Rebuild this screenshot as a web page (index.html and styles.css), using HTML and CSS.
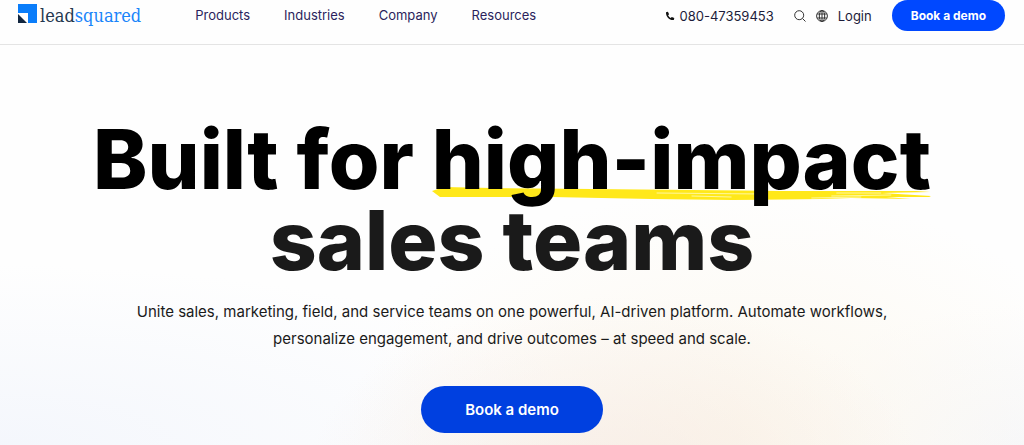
FILE: index.html
```html
<!DOCTYPE html>
<html lang="en">
<head>
    <meta charset="UTF-8">
    <meta name="viewport" content="width=device-width, initial-scale=1.0">
    <title>LeadSquared</title>
    <link rel="stylesheet" href="styles.css">
</head>
<body>
    <header class="header">
        <a class="logo" href="#">
            <svg class="logo-mark" viewBox="0 0 19 19" aria-hidden="true">
                <path d="M0 0h19v19H0z" fill="#0a7dfa"/>
                <path d="M0 9h10v10H0z" fill="#fff"/>
                <path d="M0 10l9 9H0z" fill="#12263f"/>
            </svg>
            <span class="logo-text">lead<span class="logo-accent">squared</span></span>
        </a>
        <nav class="nav">
            <a href="#">Products</a>
            <a href="#">Industries</a>
            <a href="#">Company</a>
            <a href="#">Resources</a>
        </nav>
        <div class="tools">
            <a class="phone" href="tel:08047359453">
                <svg class="phone-icon" viewBox="0 0 10 10" aria-hidden="true">
                    <path d="M1 1.2 2.9.7 4.1 3.2 3.1 4.3C3.6 5.5 4.5 6.4 5.7 6.9L6.8 5.9 9.3 7.1 8.8 9C4.5 9.5.7 5.5 1 1.2z"/>
                </svg>
                080-47359453
            </a>
            <button class="icon-btn" type="button" aria-label="Search">
                <svg class="icon" viewBox="0 0 12 12" aria-hidden="true">
                    <circle cx="5.2" cy="5.2" r="4.5"/>
                    <path d="M8.5 8.5l3 3"/>
                </svg>
            </button>
            <button class="icon-btn" type="button" aria-label="Language">
                <svg class="icon" viewBox="0 0 12 12" aria-hidden="true">
                    <circle cx="6" cy="6" r="5.4"/>
                    <ellipse cx="6" cy="6" rx="2.7" ry="5.4"/>
                    <path d="M6 .6v10.8M1.2 4h9.6M1.2 8h9.6"/>
                </svg>
            </button>
            <a class="login" href="#">Login</a>
            <button class="btn btn-small" type="button">Book a demo</button>
        </div>
    </header>

    <main class="hero">
        <h1 class="title">
            <span class="title-top">Built for <span class="marked">high-impact<svg class="stroke" viewBox="0 0 500 14" preserveAspectRatio="none" aria-hidden="true">
                <path d="M0 4 12 0 60 1 160 2 260 3 350 4 430 4 485 4 499 5 450 6 500 9 498 10 455 10 480 12 420 11 390 12 300 13 220 12 120 10 8 10 4 7z" fill="#ffe81a"/>
                <path d="M225 6 330 7M260 9 300 10M405 6 450 6M400 9 460 8M380 11 430 10" fill="none" stroke="#fff7a0"/>
            </svg></span></span>
            <span class="title-bottom">sales teams</span>
        </h1>
        <p class="lead">Unite sales, marketing, field, and service teams on one powerful, AI-driven platform. Automate workflows, personalize engagement, and drive outcomes – at speed and scale.</p>
        <button class="btn btn-large" type="button">Book a demo</button>
    </main>
</body>
</html>
```
FILE: styles.css
```css
* {
    box-sizing: border-box;
}

body {
    display: flex;
    flex-direction: column;
    min-height: 100vh;
    margin: 0;
    font-family: Inter, "Liberation Sans", sans-serif;
    color: #1a1a1a;
    background: #fefefe;
}

a {
    color: inherit;
    text-decoration: none;
}

button {
    font-family: inherit;
    border: none;
    cursor: pointer;
}

/* Header */
.header {
    display: flex;
    align-items: flex-start;
    height: 45px;
    padding: 0 19px 0 18px;
    border-bottom: 1px solid #e4e4e4;
}

.logo {
    display: flex;
    padding-top: 4px;
}

.logo-mark {
    width: 19px;
    height: 19px;
    margin-right: 3px;
}

.logo-text {
    font-family: "DejaVu Serif Condensed", "DejaVu Serif", serif;
    font-size: 18px;
    line-height: 24px;
    color: #24384f;
}

.logo-accent {
    color: #1a85fa;
}

.nav {
    display: flex;
    gap: 34px;
    margin-left: 54px;
    font-size: 13px;
    line-height: 31px;
    color: #2b1f5c;
}

.tools {
    display: flex;
    align-items: center;
    margin-left: auto;
    height: 31px;
    font-size: 13px;
    color: #1c1c3a;
}

.phone {
    display: flex;
    align-items: center;
    gap: 4px;
    margin-right: 20px;
}

.phone-icon {
    width: 10px;
    height: 10px;
    fill: #111;
}

.icon-btn {
    display: flex;
    margin-right: 10px;
    padding: 0;
    background: none;
}

.icon {
    width: 12px;
    height: 12px;
    fill: none;
    stroke: #333;
}

.login {
    margin-right: 20px;
}

.btn {
    color: #fff;
    font-weight: 600;
    border-radius: 30px;
}

.btn-small {
    height: 31px;
    padding: 0 19px;
    font-size: 12px;
    font-weight: 700;
    background: #0048ff;
}

/* Hero */
.hero {
    flex: 1;
    display: flex;
    flex-direction: column;
    align-items: center;
    padding: 74px 24px 12px;
    text-align: center;
    background:
        radial-gradient(ellipse 30% 45% at 60% 108%, rgba(244, 230, 222, 0.6), transparent),
        radial-gradient(ellipse 38% 62% at 72% 98%, rgba(252, 246, 234, 0.8), transparent),
        radial-gradient(ellipse 60% 45% at 0% 100%, rgba(243, 246, 252, 0.9), transparent),
        radial-gradient(ellipse 25% 35% at 100% 100%, rgba(245, 247, 252, 0.9), transparent),
        #fefefe;
}

.title {
    margin: 0;
    font-size: 82px;
    line-height: 81px;
    font-weight: 800;
}

.title-top,
.title-bottom {
    display: block;
}

.title-top {
    color: #000;
}

.marked {
    position: relative;
    z-index: 0;
}

/* Highlighter line behind the words */
.stroke {
    position: absolute;
    z-index: -1;
    left: 0;
    bottom: 8px;
    width: 100%;
    height: 14px;
}

.lead {
    max-width: 760px;
    margin: 17px 0 34px;
    font-size: 15px;
    line-height: 27px;
}

.btn-large {
    height: 47px;
    padding: 0 44px;
    font-size: 15px;
    background: #0040e0;
}
```
